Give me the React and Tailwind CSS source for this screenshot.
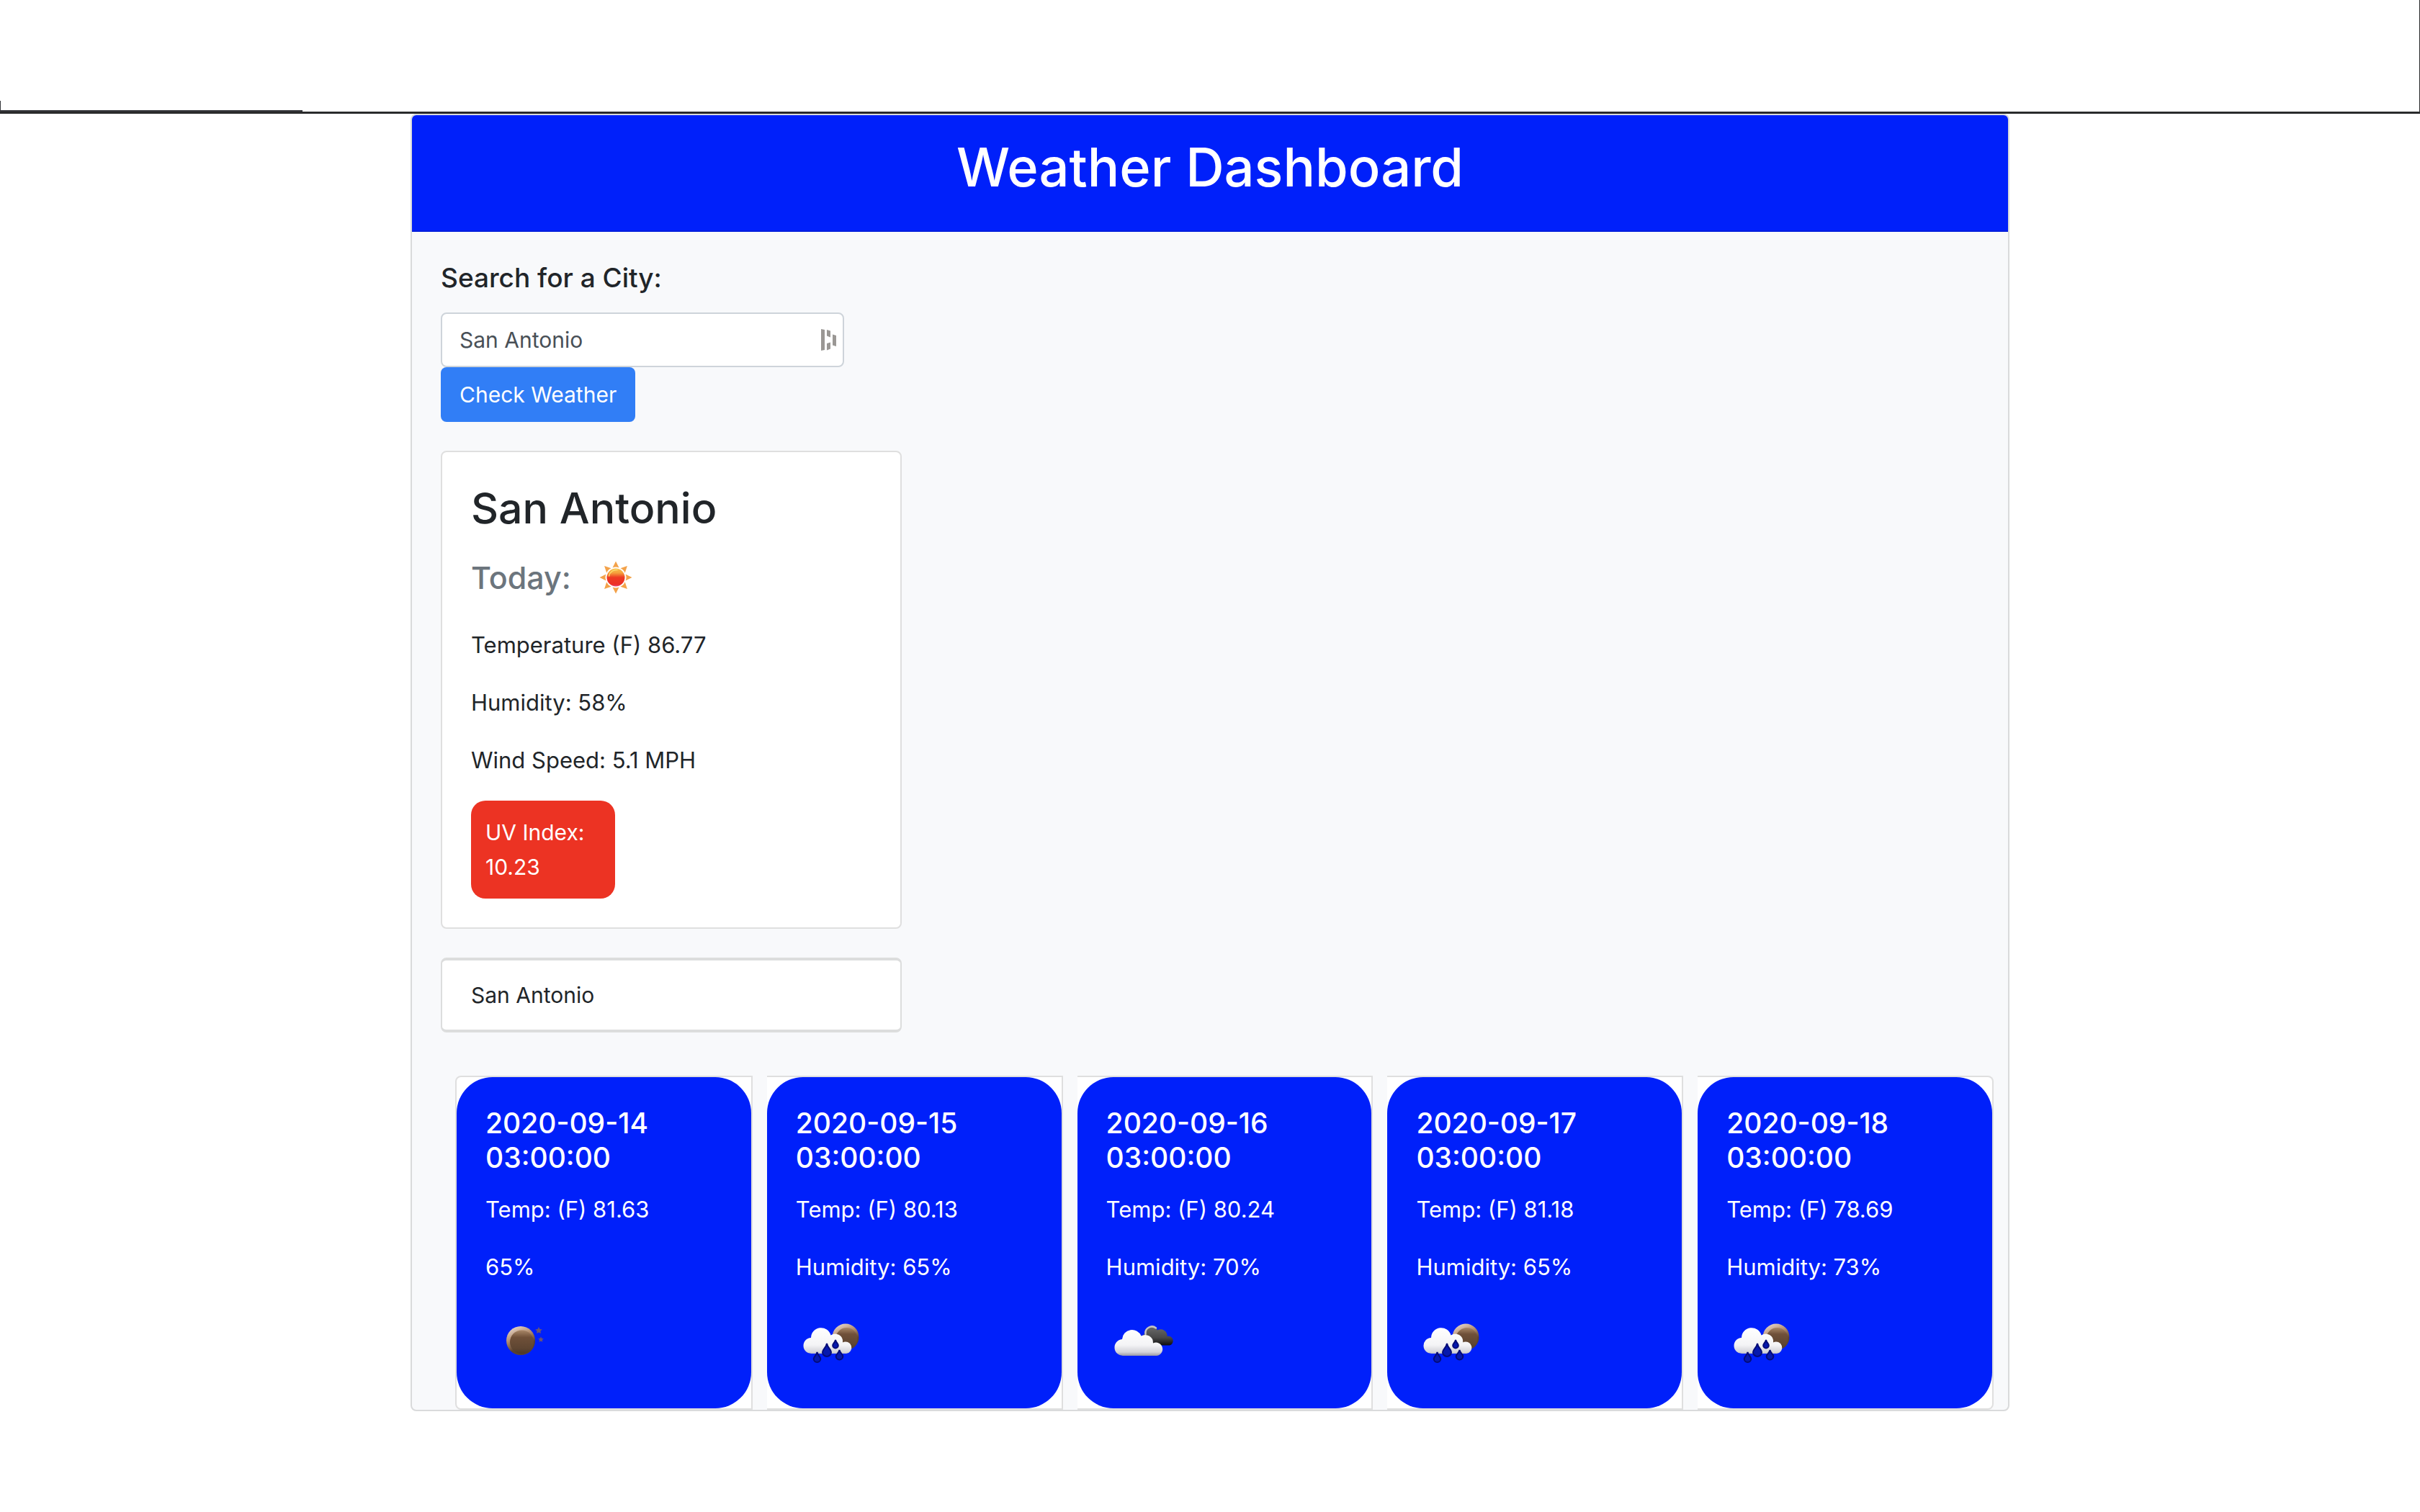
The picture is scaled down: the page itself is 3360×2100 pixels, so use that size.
import React from "react";

const star = (cx, cy, r) =>
  Array.from({ length: 10 }, (_, i) => {
    const radius = i % 2 ? r * 0.5 : r;
    const a = (Math.PI / 5) * i - Math.PI / 2;
    return `${cx + radius * Math.cos(a)},${cy + radius * Math.sin(a)}`;
  }).join(" ");

function SunIcon() {
  return (
    <svg className="size-[100px]" viewBox="0 0 100 100" role="img" aria-label="Clear sky">
      <defs>
        <linearGradient id="sun" x1="0" y1="0" x2="0" y2="1">
          <stop offset="0" stopColor="#f9c04a" />
          <stop offset="0.25" stopColor="#f5a03c" />
          <stop offset="0.5" stopColor="#ee3a22" />
          <stop offset="0.9" stopColor="#ec2f28" />
          <stop offset="1" stopColor="#e8508a" />
        </linearGradient>
      </defs>
      {[0, 45, 90, 135, 180, 225, 270, 315].map((a) => (
        <path key={a} d="M50 27.5 L54.5 36.5 Q50 34.5 45.5 36.5 Z" fill="#f3a24a" transform={`rotate(${a} 50 50)`} />
      ))}
      <circle cx="50" cy="50" r="12.5" fill="url(#sun)" />
      <path d="M40.5 48 A10.5 10.5 0 0 1 52 39.5" fill="none" stroke="#fbdc6e" strokeWidth="1.5" strokeLinecap="round" />
    </svg>
  );
}

function Moon({ id, cx, cy, r }) {
  return (
    <g>
      <defs>
        <linearGradient id={id} x1="0" y1="0" x2="0" y2="1">
          <stop offset="0" stopColor="#a98768" />
          <stop offset="0.3" stopColor="#6f5039" />
          <stop offset="0.75" stopColor="#5f4632" />
          <stop offset="1" stopColor="#4c3829" />
        </linearGradient>
        <linearGradient id={`${id}-rim`} x1="0.2" y1="0" x2="0.6" y2="0.9">
          <stop offset="0" stopColor="#eadbd0" />
          <stop offset="0.45" stopColor="#b08a6c" />
          <stop offset="0.8" stopColor="#5a4230" />
        </linearGradient>
      </defs>
      <circle cx={cx} cy={cy} r={r} fill={`url(#${id}-rim)`} />
      <circle cx={cx + 1.5} cy={cy + 2} r={r - 3.5} fill={`url(#${id})`} />
    </g>
  );
}

function MoonIcon() {
  return (
    <svg className="size-[100px]" viewBox="0 0 100 100" role="img" aria-label="Clear night">
      <Moon id="moon-clear" cx={49} cy={46} r={20} />
      <polygon points={star(74, 32, 5)} fill="#6b5672" />
      <polygon points={star(77, 44.5, 4)} fill="#6b5672" />
    </svg>
  );
}

function CloudFill({ id }) {
  return (
    <linearGradient id={id} gradientUnits="userSpaceOnUse" x1="0" y1="28" x2="0" y2="68">
      <stop offset="0" stopColor="#ffffff" />
      <stop offset="0.6" stopColor="#f4f4f6" />
      <stop offset="0.85" stopColor="#d2d2d8" />
      <stop offset="1" stopColor="#8d8d9a" />
    </linearGradient>
  );
}

const drop = (x, top, bottom, half) =>
  `M${x} ${top} C${x + 1} ${top + (bottom - top) * 0.35} ${x + half} ${top + (bottom - top) * 0.45} ${x + half} ${bottom - half} A${half} ${half} 0 0 1 ${x - half} ${bottom - half} C${x - half} ${top + (bottom - top) * 0.45} ${x - 1} ${top + (bottom - top) * 0.35} ${x} ${top} Z`;

function RainIcon({ id }) {
  return (
    <svg className="size-[100px]" viewBox="0 0 100 100" role="img" aria-label="Night rain">
      <defs>
        <CloudFill id={`${id}-cloud`} />
      </defs>
      <Moon id={`${id}-moon`} cx={69} cy={41} r={18.5} />
      <path
        d="M22 64 A11 11 0 0 1 21 42 A14 14 0 0 1 48.5 38.5 A10.5 10.5 0 0 1 65 48.5 A8.3 8.3 0 1 1 70 64 Z"
        fill={`url(#${id}-cloud)`}
      />
      <g fill="#0619ae" stroke="#040c78" strokeWidth="2">
        <path d={drop(43, 50, 68, 6)} />
        <path d={drop(55, 45, 56.5, 3.8)} />
        <path d={drop(29.5, 62, 76, 4.8)} />
        <path d={drop(60.5, 59, 72.5, 4.8)} />
      </g>
    </svg>
  );
}

function CloudsIcon() {
  return (
    <svg className="size-[100px]" viewBox="0 0 100 100" role="img" aria-label="Broken clouds">
      <defs>
        <CloudFill id="clouds-front" />
        <linearGradient id="clouds-back" x1="0" y1="0" x2="0" y2="1">
          <stop offset="0" stopColor="#6c6c6c" />
          <stop offset="0.6" stopColor="#484848" />
          <stop offset="1" stopColor="#0c0c0c" />
        </linearGradient>
      </defs>
      <path d="M52 46 A5 5 0 0 1 53 37 A9.5 9.5 0 0 1 71 31.5 A9 9 0 0 1 84.5 40 A6.4 6.4 0 1 1 88 52.5 L60 52.5 Z" fill="url(#clouds-back)" />
      <path d="M54.5 37 A9 9 0 0 1 69 28.5" fill="none" stroke="#c4c4c4" strokeWidth="2.5" strokeLinecap="round" />
      <path
        d="M24 67 A11.5 11.5 0 0 1 22 44 A13.8 13.8 0 0 1 48.5 39.5 A11 11 0 0 1 65 49.5 A9.2 9.2 0 1 1 69.5 67 Z"
        fill="url(#clouds-front)"
      />
    </svg>
  );
}

const forecast = [
  { date: "2020-09-14", temp: "81.63", humidity: "65%", icon: "moon" },
  { date: "2020-09-15", temp: "80.13", humidity: "Humidity: 65%", icon: "rain" },
  { date: "2020-09-16", temp: "80.24", humidity: "Humidity: 70%", icon: "clouds" },
  { date: "2020-09-17", temp: "81.18", humidity: "Humidity: 65%", icon: "rain" },
  { date: "2020-09-18", temp: "78.69", humidity: "Humidity: 73%", icon: "rain" },
];

function ForecastIcon({ icon, id }) {
  if (icon === "moon") return <MoonIcon />;
  if (icon === "clouds") return <CloudsIcon />;
  return <RainIcon id={id} />;
}

function ForecastCard({ day }) {
  return (
    <article className="min-w-0 flex-1 border-y-2 border-r-2 border-[#dfdfdf] bg-white first:rounded-l-lg first:border-l-2 last:rounded-r-lg">
      <div className="rounded-[50px] bg-[#0020fa] p-10 text-white">
        <h3 className="mb-6 text-[39px] leading-[48px] font-medium">
          {day.date} <br />
          03:00:00
        </h3>
        <p className="mb-8">Temp: (F) {day.temp}</p>
        <p className="mb-8">{day.humidity}</p>
        <ForecastIcon icon={day.icon} id={`day-${day.date}`} />
      </div>
    </article>
  );
}

export default function App() {
  return (
    <div className="min-h-screen bg-white font-['Inter',sans-serif] text-[31px] leading-[48px] text-[#212529]">
      <div className="flex h-[158px] items-end border-r border-b-[3px] border-[#2a2b2c]">
        <div className="h-[15px] w-1/8 border-b-2 border-l border-[#35363a]" />
      </div>

      <main className="mx-auto max-w-[2220px] rounded-lg border-2 border-[#d9dadb] bg-[#f8f9fb]">
        <header className="rounded-t-md border-b-2 border-[#001cdb] bg-[#0020fa] pt-6 pb-10 text-center text-white">
          <h1 className="text-[74px] leading-[96px] font-medium">Weather Dashboard</h1>
        </header>

        <div className="px-10 pt-10">
          <form className="max-w-[560px]" onSubmit={(e) => e.preventDefault()}>
            <label htmlFor="city" className="mb-6 block text-[37px] font-medium">
              Search for a City:
            </label>
            <div className="relative">
              <input
                id="city"
                type="text"
                defaultValue="San Antonio"
                className="block h-[76px] w-full rounded-lg border-2 border-[#ced4da] bg-white px-6 text-[30px] text-[#495057] outline-none"
              />
              <svg className="absolute top-[22px] right-[10px] h-8 w-[22px]" viewBox="0 0 22 32" fill="#9a9794" aria-hidden="true">
                <path d="M0 1 l5 1 v28 l-5 1 z" />
                <path d="M8 2 l5 1.5 v9 l-5 -2 z" />
                <path d="M8 21 l5 -1.5 v9 l-5 2 z" />
                <path d="M16 8.5 l5 1.5 v15 l-5 -1.5 z" />
              </svg>
            </div>
            <button type="submit" className="block h-[76px] rounded-lg bg-[#317ef6] px-[26px] text-[30px] text-white">
              Check Weather
            </button>
          </form>

          <section className="mt-10 max-w-[640px] rounded-lg border-2 border-[#dfdfdf] bg-white p-10">
            <h2 className="text-[59px] leading-[76px] font-medium">San Antonio</h2>
            <div className="mt-2 mb-5 flex items-center gap-3">
              <h3 className="text-[43px] font-medium text-[#6c757d]">Today:</h3>
              <SunIcon />
            </div>
            <p className="mb-8">Temperature (F) 86.77</p>
            <p className="mb-8">Humidity: 58%</p>
            <p className="mb-8">Wind Speed: 5.1 MPH</p>
            <p className="w-[200px] rounded-[20px] bg-[#ec3323] p-5 text-[30px] text-white">UV Index: 10.23</p>
          </section>

          <section className="mt-10 max-w-[640px] rounded-lg border-x-2 border-y-4 border-[#dcdddd] bg-white px-10 py-6 text-[30px]">
            San Antonio
          </section>
        </div>

        <div className="mt-[60px] mr-5 ml-[60px] flex gap-5">
          {forecast.map((day) => (
            <ForecastCard key={day.date} day={day} />
          ))}
        </div>
      </main>
    </div>
  );
}
